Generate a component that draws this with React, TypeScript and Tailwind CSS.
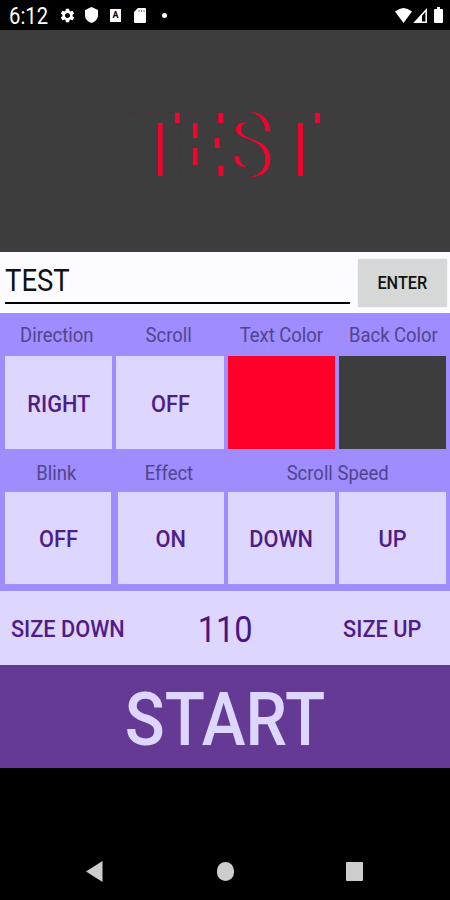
import { MdSettings } from "react-icons/md";

const label = "relative top-px inline-block whitespace-nowrap scale-x-[0.9] text-[20.5px] text-[#51458c]";
const cell = "flex items-center justify-center bg-[#ddd6ff]";
const cellText = "relative top-px inline-block whitespace-nowrap scale-x-[0.905] text-[24px] font-medium text-[#4f1c88]";

const StatusBar = () => {
  return (
    <div className="flex h-[30px] items-center justify-between bg-black pl-[9px] pr-[7px] text-white">
      <div className="flex items-center">
        <span className="mt-[3px] inline-block w-[50px] origin-left scale-x-[0.88] text-[23px] leading-none">6:12</span>
        <MdSettings className="h-[17px] w-[17px]" preserveAspectRatio="none" />
        <svg className="ml-[9px] h-[16px] w-[13px]" viewBox="0 0 13 16">
          <path fill="currentColor" d="M6.5 0 13 3v5c0 4-2.700 6.800-6.500 8C2.700 14.800 0 12 0 8V3z" />
        </svg>
        <span className="ml-[12px] flex h-[13px] w-[11px] items-center justify-center bg-white text-[9px] font-bold leading-none text-black">A</span>
        <svg className="ml-[13px] h-[15px] w-[12px]" viewBox="0 0 12 15">
          <path fill="currentColor" d="M4 0h7q1 0 1 1v13q0 1-1 1H1q-1 0-1-1V4z" />
          <path stroke="#777" strokeWidth="1" d="M5 2v2M7.500 2v2M10 2v2" />
        </svg>
        <span className="ml-[16px] h-[5px] w-[5px] rounded-full bg-white" />
      </div>
      <div className="flex items-center">
        <svg className="h-[15px] w-[17px]" viewBox="0 0 17 15">
          <path fill="currentColor" d="M0 3.500Q8.500-3.500 17 3.500L8.500 15z" />
        </svg>
        <svg className="ml-[1px] h-[15px] w-[14px]" viewBox="0 0 14 15">
          <path fill="none" stroke="currentColor" strokeWidth="1.500" d="M2 14.200 13.200 2v12.200z" />
          <path fill="currentColor" d="M1 15 9 6v9z" />
        </svg>
        <svg className="ml-[7px] h-[16px] w-[9px]" viewBox="0 0 9 16">
          <path fill="currentColor" d="M3 0h3v2h2q1 0 1 1v12q0 1-1 1H1q-1 0-1-1V3q0-1 1-1h2z" />
        </svg>
      </div>
    </div>
  );
};

const App = () => {
  return (
    <div className="flex h-[900px] w-[450px] flex-col overflow-hidden bg-black font-['Roboto',sans-serif]">
      <StatusBar />

      <div className="flex h-[222px] items-center justify-center bg-[#3d3d3d]">
        <span className="mr-[7px] mt-[10px] inline-block scale-x-[0.88] text-[88.500px] font-bold leading-none text-[#3d3d3d] [text-shadow:0_0_0_#3d3d3d,0_0_0_#3d3d3d,0_0_0_#3d3d3d,0_0_0_#3d3d3d,6px_0_0_#f0052f]">
          TEST
        </span>
      </div>

      {/* Input */}
      <div className="flex h-[61px] bg-[#fcfbff]">
        <div className="ml-[5px] h-[52px] w-[345px] border-b-2 border-black">
          <span className="mt-[11px] inline-block origin-left scale-x-[0.9] text-[30.500px] leading-[36px] text-[#111]">TEST</span>
        </div>
        <button className="ml-[8px] mt-[7px] flex h-[48px] w-[89px] items-center justify-center rounded-[2px] bg-[#d6d8d7] shadow-[0_0_1px_rgba(0,0,0,0.3)]">
          <span className="mt-[2px] inline-block scale-x-[0.88] text-[18.500px] font-medium text-[#111]">ENTER</span>
        </button>
      </div>

      {/* Controls */}
      <div className="h-[278px] bg-[#9f8cff]">
        <div className="grid h-[43px] grid-cols-4 items-center text-center">
          <span><span className={label}>Direction</span></span>
          <span><span className={label}>Scroll</span></span>
          <span><span className={label}>Text Color</span></span>
          <span><span className={label}>Back Color</span></span>
        </div>
        <div className="flex h-[93px] gap-[4px] pl-[5px]">
          <button className={`${cell} w-[107px]`}><span className={cellText}>RIGHT</span></button>
          <button className={`${cell} w-[108px]`}><span className={cellText}>OFF</span></button>
          <button className="w-[107px] bg-[#ff002b]" />
          <button className="w-[107px] bg-[#3d3d3d]" />
        </div>
        <div className="grid h-[43px] grid-cols-4 items-center pt-[4px] text-center">
          <span><span className={label}>Blink</span></span>
          <span><span className={label}>Effect</span></span>
          <span className="col-span-2"><span className={label}>Scroll Speed</span></span>
        </div>
        <div className="flex h-[92px] gap-[4px] pl-[5px]">
          <button className={`${cell} mr-[3px] w-[106px]`}><span className={cellText}>OFF</span></button>
          <button className={`${cell} w-[106px]`}><span className={cellText}>ON</span></button>
          <button className={`${cell} w-[107px]`}><span className={cellText}>DOWN</span></button>
          <button className={`${cell} w-[107px]`}><span className={cellText}>UP</span></button>
        </div>
      </div>

      {/* Size */}
      <div className="flex h-[74px] items-center bg-[#ddd6ff] text-center text-[#4a1683]">
        <span className="w-[136px]"><span className={cellText}>SIZE DOWN</span></span>
        <span className="w-[179px]"><span className="relative top-[2px] inline-block scale-x-[0.88] text-[37px]">110</span></span>
        <span className="w-[135px]"><span className={cellText}>SIZE UP</span></span>
      </div>

      <button className="flex h-[103px] items-center justify-center bg-[#643a94]">
        <span className="mt-[5px] inline-block scale-x-[0.88] text-[75px] font-medium leading-none text-[#ddd6ff]">START</span>
      </button>

      {/* Navigation */}
      <div className="mt-auto flex h-[58px] items-center pl-[86px] text-[#cdcdcd]">
        <svg className="h-[21px] w-[17px]" viewBox="0 0 17 21">
          <path fill="currentColor" d="M16.500 0v21L0 10.500z" />
        </svg>
        <span className="ml-[114px] h-[19px] w-[17px] rounded-full bg-[#cdcdcd]" />
        <span className="ml-[112px] h-[19px] w-[17px] rounded-[1px] bg-[#cdcdcd]" />
      </div>
    </div>
  );
};

export default App;
